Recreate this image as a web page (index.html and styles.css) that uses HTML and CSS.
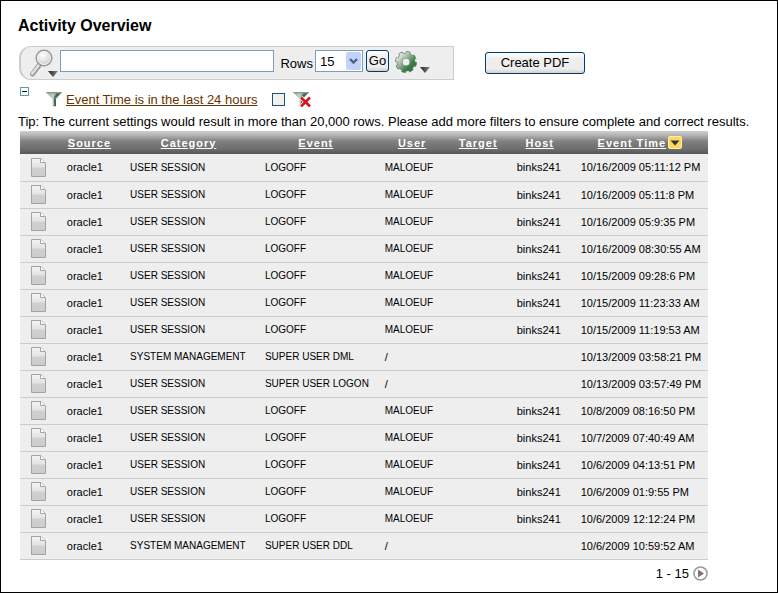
FILE: index.html
```html
<!DOCTYPE html>
<html lang="en">

<head>
    <meta charset="UTF-8">
    <meta name="viewport" content="width=device-width, initial-scale=1.0">
    <title>Activity Overview</title>
    <link rel="stylesheet" href="styles.css">
</head>

<body>

    <!-- shared icons -->
    <svg class="sprite" width="0" height="0" aria-hidden="true">
        <defs>
            <linearGradient id="docFill" x1="0" y1="0" x2="0" y2="1">
                <stop offset="0" stop-color="#f4f4f4"/>
                <stop offset="0.45" stop-color="#e4e4e0"/>
                <stop offset="0.55" stop-color="#d0d0d0"/>
                <stop offset="1" stop-color="#cccccc"/>
            </linearGradient>
            <linearGradient id="arrowFill" x1="0" y1="0" x2="1" y2="0">
                <stop offset="0" stop-color="#222"/>
                <stop offset="1" stop-color="#888"/>
            </linearGradient>
            <linearGradient id="funnelFill" x1="0" y1="0" x2="1" y2="0">
                <stop offset="0" stop-color="#7fa08a"/>
                <stop offset="0.4" stop-color="#c3d3c5"/>
                <stop offset="1" stop-color="#2f5238"/>
            </linearGradient>
            <symbol id="doc" viewBox="0 0 15 19">
                <path d="M0.5 0.5H10L14.5 5V18.5H0.5Z" fill="url(#docFill)" stroke="#a3a3a3"/>
                <path d="M9.5 0.5V4.5H14" fill="#fff" stroke="#a3a3a3"/>
            </symbol>
            <symbol id="arrow" viewBox="0 0 10 6">
                <path d="M0 0H10L5 6Z" fill="url(#arrowFill)"/>
            </symbol>
            <symbol id="funnel" viewBox="0 0 16 16">
                <path d="M0 1H16L10 8V15.5H6.5V8Z" fill="url(#funnelFill)"/>
                <path d="M0 1H16L15 2.5H1Z" fill="#8b9d8f"/>
                <path d="M8.5 8L14 2.5H10.5L8 7V15H10V8Z" fill="#42694b"/>
            </symbol>
        </defs>
    </svg>

    <main class="page">
        <h1>Activity Overview</h1>

        <div class="top">
            <form class="search-bar">
                <button type="button" class="icon-button" aria-label="Select columns">
                    <svg width="28" height="28" viewBox="0 0 28 28">
                        <defs>
                            <radialGradient id="lens" cx="0.4" cy="0.3" r="0.7">
                                <stop offset="0" stop-color="#fff"/>
                                <stop offset="1" stop-color="#cdcdcd"/>
                            </radialGradient>
                        </defs>
                        <path d="M9 16.5L2.5 25" stroke="#989c96" stroke-width="5" stroke-linecap="round"/>
                        <path d="M8.5 16.5L2.2 24.5" stroke="#dfe3dc" stroke-width="2.6" stroke-linecap="round"/>
                        <circle cx="14" cy="9" r="7.8" fill="url(#lens)" stroke="#969696" stroke-width="1.4"/>
                        <circle cx="14" cy="9" r="6.5" fill="none" stroke="#f2f2f2"/>
                        <use href="#arrow" x="18" y="22" width="10" height="6"/>
                    </svg>
                </button>
                <input type="text" class="search-text" aria-label="Search">
                <label for="rows">Rows</label>
                <span class="select-box">
                    <select id="rows">
                        <option>15</option>
                    </select>
                    <svg class="select-arrow" width="15" height="18" viewBox="0 0 15 18">
                        <rect width="15" height="18" rx="2" fill="#c1d3fb"/>
                        <path d="M4 7L7.5 10.5L11 7" fill="none" stroke="#4d6185" stroke-width="2.4"/>
                    </svg>
                </span>
                <button type="submit" class="button go">Go</button>
                <button type="button" class="icon-button gear" aria-label="Actions">
                    <svg width="35" height="22" viewBox="0 0 35 22">
                        <defs>
                            <linearGradient id="gearFill" gradientUnits="userSpaceOnUse" x1="3" y1="3" x2="19" y2="19">
                                <stop offset="0.1" stop-color="#dfe8df"/>
                                <stop offset="0.45" stop-color="#8aab8c"/>
                                <stop offset="0.7" stop-color="#3f8049"/>
                                <stop offset="1" stop-color="#2c6b3a"/>
                            </linearGradient>
                        </defs>
                        <!-- eight teeth, then the ring -->
                        <g fill="none">
                            <circle cx="11" cy="11" r="9" stroke="#6d8570" stroke-width="4" pathLength="80" stroke-dasharray="6 4"/>
                            <circle cx="11" cy="11" r="6.5" stroke="#6d8570" stroke-width="6"/>
                            <circle cx="11" cy="11" r="8.6" stroke="url(#gearFill)" stroke-width="3.2" pathLength="80" stroke-dasharray="5 5" stroke-dashoffset="-0.5"/>
                            <circle cx="11" cy="11" r="6.4" stroke="url(#gearFill)" stroke-width="4.6"/>
                        </g>
                        <use href="#arrow" x="25" y="16" width="10" height="6"/>
                    </svg>
                </button>
            </form>
            <button type="button" class="button">Create PDF</button>
        </div>

        <div class="filters">
            <button type="button" class="icon-button collapse" aria-label="Collapse filters">
                <svg width="9" height="9" viewBox="0 0 9 9">
                    <rect x="0.5" y="0.5" width="8" height="8" fill="#fff" stroke="#5f9ea0"/>
                    <path d="M2 4.5H7" stroke="#000"/>
                </svg>
            </button>
            <svg width="16" height="16"><use href="#funnel"/></svg>
            <a href="#" class="filter-link">Event Time is in the last 24 hours</a>
            <input type="checkbox" class="check" aria-label="Enable filter">
            <button type="button" class="icon-button" aria-label="Remove filter">
                <svg width="18" height="16" viewBox="0 0 18 16">
                    <use href="#funnel" width="16" height="16"/>
                    <path d="M8 6.5L17 15.5M17 6.5L8 15.5" stroke="#fff" stroke-width="4"/>
                    <path d="M8 6.5L17 15.5M17 6.5L8 15.5" stroke="#d8141c" stroke-width="2.6"/>
                </svg>
            </button>
        </div>

        <p class="tip">Tip: The current settings would result in more than 20,000 rows. Please add more filters to ensure complete and correct results.</p>

        <div class="report">
            <table>
                <colgroup>
                    <col class="col-icon">
                    <col class="col-source">
                    <col class="col-category">
                    <col class="col-event">
                    <col class="col-user">
                    <col class="col-target">
                    <col class="col-host">
                    <col class="col-time">
                </colgroup>
                <thead>
                    <tr>
                        <th></th>
                        <th><a href="#">Source</a></th>
                        <th><a href="#">Category</a></th>
                        <th><a href="#">Event</a></th>
                        <th><a href="#">User</a></th>
                        <th><a href="#">Target</a></th>
                        <th><a href="#">Host</a></th>
                        <th>
                            <div class="sorted">
                                <a href="#">Event Time</a>
                                <svg width="14" height="13" viewBox="0 0 14 13">
                                    <rect x="0.5" y="0.5" width="13" height="12" rx="1.5" fill="#fbd85c" stroke="#fff0a8"/>
                                    <path d="M2.5 4.5H11.5L7 9.5Z" fill="#333"/>
                                </svg>
                            </div>
                        </th>
                    </tr>
                </thead>
                <tbody>
                    <tr><td><svg class="doc"><use href="#doc"/></svg></td><td>oracle1</td><td class="caps">USER SESSION</td><td class="caps">LOGOFF</td><td class="caps">MALOEUF</td><td></td><td>binks241</td><td>10/16/2009 05:11:12 PM</td></tr>
                    <tr><td><svg class="doc"><use href="#doc"/></svg></td><td>oracle1</td><td class="caps">USER SESSION</td><td class="caps">LOGOFF</td><td class="caps">MALOEUF</td><td></td><td>binks241</td><td>10/16/2009 05:11:8 PM</td></tr>
                    <tr><td><svg class="doc"><use href="#doc"/></svg></td><td>oracle1</td><td class="caps">USER SESSION</td><td class="caps">LOGOFF</td><td class="caps">MALOEUF</td><td></td><td>binks241</td><td>10/16/2009 05:9:35 PM</td></tr>
                    <tr><td><svg class="doc"><use href="#doc"/></svg></td><td>oracle1</td><td class="caps">USER SESSION</td><td class="caps">LOGOFF</td><td class="caps">MALOEUF</td><td></td><td>binks241</td><td>10/16/2009 08:30:55 AM</td></tr>
                    <tr><td><svg class="doc"><use href="#doc"/></svg></td><td>oracle1</td><td class="caps">USER SESSION</td><td class="caps">LOGOFF</td><td class="caps">MALOEUF</td><td></td><td>binks241</td><td>10/15/2009 09:28:6 PM</td></tr>
                    <tr><td><svg class="doc"><use href="#doc"/></svg></td><td>oracle1</td><td class="caps">USER SESSION</td><td class="caps">LOGOFF</td><td class="caps">MALOEUF</td><td></td><td>binks241</td><td>10/15/2009 11:23:33 AM</td></tr>
                    <tr><td><svg class="doc"><use href="#doc"/></svg></td><td>oracle1</td><td class="caps">USER SESSION</td><td class="caps">LOGOFF</td><td class="caps">MALOEUF</td><td></td><td>binks241</td><td>10/15/2009 11:19:53 AM</td></tr>
                    <tr><td><svg class="doc"><use href="#doc"/></svg></td><td>oracle1</td><td class="caps">SYSTEM MANAGEMENT</td><td class="caps">SUPER USER DML</td><td>/</td><td></td><td></td><td>10/13/2009 03:58:21 PM</td></tr>
                    <tr><td><svg class="doc"><use href="#doc"/></svg></td><td>oracle1</td><td class="caps">USER SESSION</td><td class="caps">SUPER USER LOGON</td><td>/</td><td></td><td></td><td>10/13/2009 03:57:49 PM</td></tr>
                    <tr><td><svg class="doc"><use href="#doc"/></svg></td><td>oracle1</td><td class="caps">USER SESSION</td><td class="caps">LOGOFF</td><td class="caps">MALOEUF</td><td></td><td>binks241</td><td>10/8/2009 08:16:50 PM</td></tr>
                    <tr><td><svg class="doc"><use href="#doc"/></svg></td><td>oracle1</td><td class="caps">USER SESSION</td><td class="caps">LOGOFF</td><td class="caps">MALOEUF</td><td></td><td>binks241</td><td>10/7/2009 07:40:49 AM</td></tr>
                    <tr><td><svg class="doc"><use href="#doc"/></svg></td><td>oracle1</td><td class="caps">USER SESSION</td><td class="caps">LOGOFF</td><td class="caps">MALOEUF</td><td></td><td>binks241</td><td>10/6/2009 04:13:51 PM</td></tr>
                    <tr><td><svg class="doc"><use href="#doc"/></svg></td><td>oracle1</td><td class="caps">USER SESSION</td><td class="caps">LOGOFF</td><td class="caps">MALOEUF</td><td></td><td>binks241</td><td>10/6/2009 01:9:55 PM</td></tr>
                    <tr><td><svg class="doc"><use href="#doc"/></svg></td><td>oracle1</td><td class="caps">USER SESSION</td><td class="caps">LOGOFF</td><td class="caps">MALOEUF</td><td></td><td>binks241</td><td>10/6/2009 12:12:24 PM</td></tr>
                    <tr><td><svg class="doc"><use href="#doc"/></svg></td><td>oracle1</td><td class="caps">SYSTEM MANAGEMENT</td><td class="caps">SUPER USER DDL</td><td>/</td><td></td><td></td><td>10/6/2009 10:59:52 AM</td></tr>
                </tbody>
            </table>

            <div class="pager">
                <span>1 - 15</span>
                <button type="button" class="icon-button" aria-label="Next page">
                    <svg width="15" height="15" viewBox="0 0 15 15">
                        <circle cx="7.5" cy="7.5" r="6.5" fill="#fff" stroke="#999" stroke-width="1.5"/>
                        <path d="M5 3.5V11.5L11 7.5Z" fill="#777"/>
                    </svg>
                </button>
            </div>
        </div>
    </main>

</body>

</html>
```

FILE: styles.css
```css
* {
    box-sizing: border-box;
}

body {
    margin: 0;
    background-color: #fff;
    color: #000;
    font-family: "Liberation Sans", Arial, sans-serif;
    font-size: 13px;
}

svg {
    display: block;
    flex: none;
}

.sprite {
    position: absolute;
}

.page {
    min-height: 100vh;
    border: 1px solid #000;
    padding: 15px 17px 10px;
}

h1 {
    margin: 0 0 10px;
    font-size: 16px;
    line-height: 20px;
}

.top {
    display: flex;
    align-items: center;
    gap: 31px;
    padding-left: 1px;
}

.search-bar {
    display: flex;
    align-items: center;
    width: 435px;
    height: 34px;
    padding-left: 9px;
    border: 1px solid #ccc;
    border-left-width: 2px;
    border-radius: 12px 0 0 12px;
    background-color: #eee;
}

.icon-button {
    padding: 0;
    border: none;
    background: none;
    cursor: pointer;
}

.search-text {
    flex: 1;
    min-width: 0;
    height: 22px;
    margin: 0 6px 4px 2px;
    border: 1px solid #7f9db9;
    background-color: #fff;
}

.select-box {
    position: relative;
    margin: 0 3px 4px 2px;
}

select {
    display: block;
    width: 48px;
    height: 22px;
    padding: 0 4px;
    border: 1px solid #7f9db9;
    appearance: none;
    background-color: #fff;
    color: #000;
    font: inherit;
}

.select-arrow {
    position: absolute;
    top: 2px;
    right: 2px;
    pointer-events: none;
}

.button {
    width: 100px;
    height: 22px;
    padding: 0 0 2px;
    border: 1px solid #003c74;
    border-radius: 3px;
    background: linear-gradient(#fff, #eee 30%, #eee 80%, #d6d0c5);
    color: #000;
    font: inherit;
    cursor: pointer;
}

.go {
    width: 23px;
    margin-bottom: 4px;
}

.gear {
    margin: 0 23px 2px 6px;
}

.filters {
    display: flex;
    align-items: center;
    height: 30px;
    margin-top: 4px;
    padding-left: 2px;
}

.filters .collapse {
    align-self: flex-start;
    margin: 3px 17px 0 0;
}

.filter-link {
    margin: 0 15px 0 4px;
    color: #663300;
}

.check {
    width: 13px;
    height: 13px;
    margin: 0 8px 0 0;
    border: 1px solid #1c5180;
    appearance: none;
    background-color: #f0f0ec;
}

.check:checked {
    background-color: #1c5180;
}

.tip {
    margin: 0;
    padding-bottom: 2px;
    line-height: 15px;
}

.report {
    margin: 0 52px 0 2px;
}

table {
    width: 100%;
    border-collapse: collapse;
    table-layout: fixed;
    font-size: 11px;
}

.col-icon {
    width: 5.5%;
}

.col-source {
    width: 9.2%;
}

.col-category {
    width: 19.6%;
}

.col-event {
    width: 17.4%;
}

.col-user {
    width: 10.6%;
}

.col-target {
    width: 8.6%;
}

.col-host {
    width: 9.3%;
}

.col-time {
    width: 19.8%;
}

thead {
    background: linear-gradient(#d0d0d0, #b0b0b0 20%, #808080 45%, #6c6c6c 80%, #555);
}

th {
    height: 23px;
    padding: 0;
    letter-spacing: 1px;
}

th a {
    color: #fff;
}

.sorted {
    display: flex;
    align-items: center;
    justify-content: center;
    gap: 2px;
}

td {
    height: 27px;
    padding: 0 0 0 9px;
    border-bottom: 1px solid #ccc;
    background-color: #eee;
    white-space: nowrap;
}

.caps {
    font-size: 10px;
}

.doc {
    width: 15px;
    height: 19px;
    margin-left: 2px;
}

.pager {
    display: flex;
    align-items: center;
    justify-content: flex-end;
    gap: 4px;
    padding-top: 6px;
}
```
